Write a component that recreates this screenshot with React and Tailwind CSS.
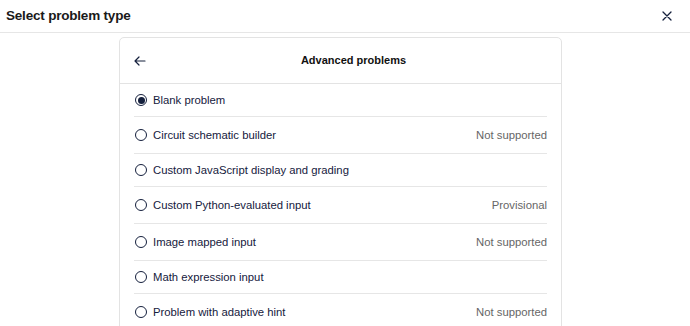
import React from "react";

const rows = [
  { label: "Blank problem", selected: true },
  { label: "Circuit schematic builder", status: "Not supported" },
  { label: "Custom JavaScript display and grading" },
  { label: "Custom Python-evaluated input", status: "Provisional" },
  { label: "Image mapped input", status: "Not supported" },
  { label: "Math expression input" },
  { label: "Problem with adaptive hint", status: "Not supported" },
];

function Radio({ selected }) {
  return (
    <span className="flex h-[12px] w-[12px] shrink-0 items-center justify-center rounded-full border-[1.3px] border-[#15203d]">
      {selected && <span className="h-[7px] w-[7px] rounded-full bg-[#15203d]" />}
    </span>
  );
}

export default function App() {
  return (
    <div className="h-[326px] w-[690px] overflow-hidden bg-white font-['Liberation_Sans',Arial,sans-serif] text-[#15203d]">
      <div className="flex h-[33px] items-center justify-between border-b border-[#e6e6e6] pl-[6px] pr-[18px]">
        <h1 className="text-[13.5px] font-bold tracking-[-0.2px] text-[#1a1a1a]">Select problem type</h1>
        <svg width="10" height="10" viewBox="0 0 10 10" className="text-[#15203d]">
          <path d="M1 1L9 9M9 1L1 9" stroke="currentColor" strokeWidth="1.3" strokeLinecap="round" />
        </svg>
      </div>
      <div className="ml-[119px] w-[443px] pt-[4px]">
        <div className="rounded-[5px] border border-[#e3e3e3]">
          <div className="flex h-[46px] items-center border-b border-[#e3e3e3] px-[14px]">
            <span className="flex w-[26px] items-center">
              <svg width="12" height="10" viewBox="0 0 12 10">
                <path d="M11 5H1.2M5 1L1 5L5 9" fill="none" stroke="#15203d" strokeWidth="1.2" strokeLinecap="round" strokeLinejoin="round" />
              </svg>
            </span>
            <h2 className="flex-1 text-center text-[11px] font-bold text-[#111]">Advanced problems</h2>
          </div>
          <div className="px-[14px]">
            {rows.map((r, i) => (
              <div
                key={r.label}
                className={`flex items-center justify-between py-[10px] ${i < rows.length - 1 ? "border-b border-[#e6e6e6]" : ""}`}
              >
                <div className="flex items-center gap-[6px] pl-[1px]">
                  <Radio selected={r.selected} />
                  <span className="text-[11.3px] leading-[12px]">{r.label}</span>
                </div>
                {r.status && (
                  <span className="py-[2px] text-[11.3px] leading-[12px] text-[#666]">{r.status}</span>
                )}
              </div>
            ))}
          </div>
        </div>
      </div>
    </div>
  );
}
